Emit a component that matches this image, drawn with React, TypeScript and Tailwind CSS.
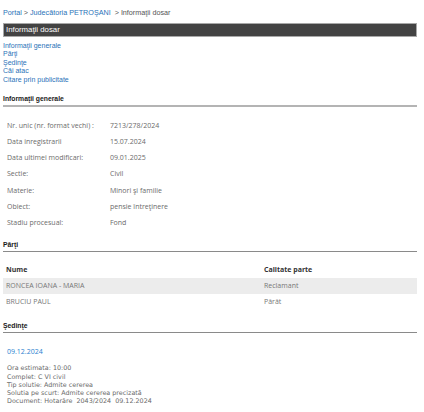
import React from 'react';

const links = ['Informaţii generale', 'Părţi', 'Şedinţe', 'Căi atac', 'Citare prin publicitate'];

const details: [string, string][] = [
    ['Nr. unic (nr. format vechi) :', '7213/278/2024'],
    ['Data inregistrarii', '15.07.2024'],
    ['Data ultimei modificari:', '09.01.2025'],
    ['Sectie:', 'Civil'],
    ['Materie:', 'Minori şi familie'],
    ['Obiect:', 'pensie întreţinere'],
    ['Stadiu procesual:', 'Fond'],
];

const parti = [
    { nume: 'RONCEA IOANA - MARIA', calitate: 'Reclamant' },
    { nume: 'BRUCIU PAUL', calitate: 'Pârât' },
];

const sedinta = [
    'Ora estimata: 10:00',
    'Complet: C VI civil',
    'Tip solutie: Admite cererea',
    'Solutia pe scurt: Admite cererea precizată',
    'Document: Hotarâre  2043/2024  09.12.2024',
];

function SectionTitle({ title, thick }: { title: string; thick?: boolean }) {
    return (
        <div className={thick ? 'border-b-2 border-[#b4b4b4]' : 'border-b border-[#8a8a8a]'}>
            <h3 className="h-[12px] text-[6.8px] font-bold leading-[12px] text-[#1a1a1a]">{title}</h3>
        </div>
    );
}

export default function App() {
    return (
        <div className="w-[424px] h-[412px] overflow-hidden bg-white pl-[3px] pr-[7px] font-['Liberation_Sans',Arial,sans-serif]">
            {/* breadcrumb */}
            <div className="pt-[8px] h-[23px] text-[7.2px] leading-[10px] text-[#555] whitespace-pre">
                <span className="text-[#2a72b8]">Portal</span>
                <span>{' > '}</span>
                <span className="text-[#2a72b8]">Judecătoria PETROŞANI</span>
                <span>{'  > Informaţii dosar'}</span>
            </div>

            <div className="h-[14px] bg-[#434343] border border-[#a8a8a8] pl-[2px] text-[7.8px] leading-[12px] text-white">
                Informaţii dosar
            </div>

            <ul className="mt-[5px] text-[7px] leading-[8.4px] text-[#2a72b8]">
                {links.map((l) => (
                    <li key={l}>{l}</li>
                ))}
            </ul>

            <div className="mt-[9px]">
                <SectionTitle title="Informaţii generale" thick />
            </div>

            <div className="mt-[11px] font-['Open_Sans','Noto_Sans',sans-serif] text-[7px] text-[#6b6b6b]">
                {details.map(([label, value]) => (
                    <div key={label} className="flex h-[16.2px] items-center">
                        <span className="w-[107px] pl-[4px] shrink-0">{label}</span>
                        <span>{value}</span>
                    </div>
                ))}
            </div>

            <div className="mt-[8px]">
                <SectionTitle title="Părţi" />
            </div>

            <div className="mt-[10px] font-['Open_Sans','Noto_Sans',sans-serif] text-[7px]">
                <div className="flex h-[16px] items-center font-bold text-[#333]">
                    <span className="w-[261px] pl-[3px]">Nume</span>
                    <span>Calitate parte</span>
                </div>
                {parti.map((p, i) => (
                    <div
                        key={p.nume}
                        className={`flex h-[16px] items-center text-[#777] ${i === 0 ? 'bg-[#ececec]' : ''}`}
                    >
                        <span className="w-[261px] pl-[3px]">{p.nume}</span>
                        <span>{p.calitate}</span>
                    </div>
                ))}
            </div>

            <div className="mt-[10px]">
                <SectionTitle title="Şedinţe" />
            </div>

            <div className="pl-[4px]">
                <div className="mt-[14px] font-['Open_Sans','Noto_Sans',sans-serif] text-[7px] leading-[10px] text-[#2a7fd0]">
                    09.12.2024
                </div>
                <div className="mt-[7px] font-['DejaVu_Sans',Verdana,sans-serif] text-[6.4px] leading-[8.25px] text-[#6a6a6a]">
                    {sedinta.map((s) => (
                        <div key={s} className="whitespace-pre">{s}</div>
                    ))}
                </div>
            </div>
        </div>
    );
}
